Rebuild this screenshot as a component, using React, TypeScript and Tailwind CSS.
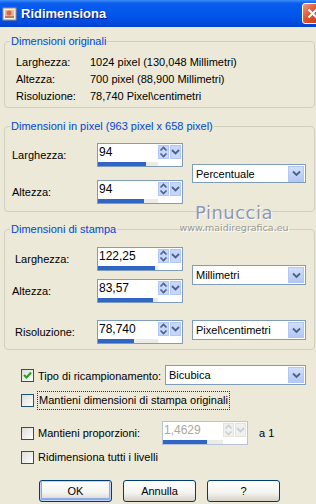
import React from "react";

const font = "font-['Liberation_Sans',Arial,sans-serif]";

function SpinArrows({ disabled }: { disabled?: boolean }) {
  const c = disabled ? "#C8CDD8" : "#4D6185";
  const bg = disabled ? "bg-[#F1F1EC] border-[#E3E3DC]" : "bg-[#C6D6FC] border-[#B3C7F4]";
  return (
    <div className="flex gap-[1px] mt-[1px] mr-[1px]">
      <div className={`w-[11px] h-[14px] border ${bg} flex items-center justify-center`}>
        <svg width="9" height="12" viewBox="0 0 9 12">
          <path d="M1.5 4.5 L4.5 1.5 L7.5 4.5" stroke={c} strokeWidth="1.6" fill="none" />
          <path d="M1.5 7.5 L4.5 10.5 L7.5 7.5" stroke={c} strokeWidth="1.6" fill="none" />
        </svg>
      </div>
      <div className={`w-[11px] h-[14px] border ${bg} flex items-center justify-center`}>
        <svg width="9" height="8" viewBox="0 0 9 8">
          <path d="M1 2 L4.5 5.5 L8 2" stroke={c} strokeWidth="1.8" fill="none" />
        </svg>
      </div>
    </div>
  );
}

function Spinner({ value, fill, disabled }: { value: string; fill: number; disabled?: boolean }) {
  return (
    <div
      className={`w-[86px] h-[24px] border ${
        disabled ? "border-[#B5C3D6]" : "border-[#7F9DB9]"
      } bg-white flex flex-col shrink-0`}
    >
      <div className="flex h-[17px]">
        <span
          className={`flex-1 pl-[1px] text-[12px] leading-[16px] ${
            disabled ? "text-[#ACA899]" : "text-black"
          }`}
        >
          {value}
        </span>
        <SpinArrows disabled={disabled} />
      </div>
      <div className="h-[4px] w-[60px] bg-[#ECEBE6] mt-[1px]">
        <div className="h-full bg-[#2F65C5]" style={{ width: fill }} />
      </div>
    </div>
  );
}

function Select({ label, width, height = 20 }: { label: string; width: number; height?: number }) {
  return (
    <div
      className="border border-[#7F9DB9] bg-white flex items-center shrink-0"
      style={{ width, height }}
    >
      <span className="flex-1 pl-[3px] text-[11px] leading-[14px]">{label}</span>
      <div className="w-[16px] h-[16px] mr-[1px] border border-[#B3C7F4] bg-[linear-gradient(to_bottom,#D2DEFC,#B3C8F5)] flex items-center justify-center">
        <svg width="9" height="7" viewBox="0 0 9 7">
          <path d="M1 1.5 L4.5 5 L8 1.5" stroke="#4D6185" strokeWidth="1.8" fill="none" />
        </svg>
      </div>
    </div>
  );
}

function Checkbox({ checked }: { checked?: boolean }) {
  return (
    <div className="w-[13px] h-[13px] border border-[#1C5180] bg-[linear-gradient(135deg,#DCDCD7,#FFFFFF)] flex items-center justify-center shrink-0">
      {checked && (
        <svg width="9" height="9" viewBox="0 0 9 9">
          <path d="M1 4 L3.5 6.5 L8 1.5" stroke="#21A121" strokeWidth="2" fill="none" />
        </svg>
      )}
    </div>
  );
}

function Button({ label, def }: { label: string; def?: boolean }) {
  return (
    <div
      className={`w-[73px] h-[22px] rounded-[3px] border border-[#003C74] flex items-center justify-center text-[11px] bg-[linear-gradient(to_bottom,#FFFFFF,#F3F3EF_60%,#D6D0C5)] ${
        def ? "shadow-[inset_0_0_0_1px_#C1D3FB,inset_0_-1px_0_2px_#8BAAE8]" : ""
      }`}
    >
      {label}
    </div>
  );
}

function Group({ title, className, children }: { title: string; className: string; children: React.ReactNode }) {
  return (
    <fieldset
      className={`ml-[4px] mr-[1px] border border-[#D0D0BF] rounded-[4px] pl-[7px] ${className}`}
    >
      <legend className="ml-[-2px] px-[1px] text-[#0046D5] text-[11px] leading-[14px]">{title}</legend>
      {children}
    </fieldset>
  );
}

export default function App() {
  return (
    <div className={`w-[316px] h-[504px] bg-[#ECE9D8] overflow-hidden relative text-black text-[11px] ${font}`}>
      {/* title bar */}
      <div className="h-[27px] flex items-center bg-[linear-gradient(to_bottom,#3D8FF7,#0A5CEE_12%,#0055EA_60%,#0049D9_90%,#003FC8)]">
        <svg width="16" height="16" viewBox="0 0 16 16" className="ml-[2px] mr-[3px]">
          <rect x="1" y="2" width="13" height="12" fill="#F4EFE6" stroke="#A98F6A" />
          <rect x="3" y="4" width="9" height="8" fill="#E9B797" />
          <circle cx="7" cy="7" r="2.5" fill="#D9684B" />
          <rect x="3" y="10" width="9" height="2" fill="#C27B52" />
        </svg>
        <span className="text-white font-bold text-[13px] [text-shadow:1px_1px_#0A1883]">Ridimensiona</span>
        <div className="ml-auto mr-[-7px] w-[21px] h-[21px] rounded-[3px] border border-white bg-[linear-gradient(135deg,#F09A7F,#E1552B_45%,#C43A14)] flex items-center justify-center">
          <svg width="11" height="11" viewBox="0 0 11 11">
            <path d="M1.5 1.5 L9.5 9.5 M9.5 1.5 L1.5 9.5" stroke="white" strokeWidth="2" />
          </svg>
        </div>
      </div>

      <Group title="Dimensioni originali" className="mt-[7px] pb-[2px]">
        <div className="pt-[6px] pl-[4px] flex flex-col">
          {[
            ["Larghezza:", "1024 pixel (130,048 Millimetri)"],
            ["Altezza:", "700 pixel (88,900 Millimetri)"],
            ["Risoluzione:", "78,740 Pixel\\centimetri"],
          ].map(([l, v]) => (
            <div key={l} className="h-[17px] flex items-center">
              <span className="w-[74px]">{l}</span>
              <span>{v}</span>
            </div>
          ))}
        </div>
      </Group>

      <Group title="Dimensioni in pixel (963 pixel x 658 pixel)" className="mt-[11px] pb-[7px]">
        <div className="pt-[10px] flex items-center">
          <div className="flex flex-col gap-[13px]">
            <div className="flex items-center">
              <span className="w-[85px]">Larghezza:</span>
              <Spinner value="94" fill={48} />
            </div>
            <div className="flex items-center">
              <span className="w-[85px]">Altezza:</span>
              <Spinner value="94" fill={46} />
            </div>
          </div>
          <div className="ml-[9px]">
            <Select label="Percentuale" width={114} height={19} />
          </div>
        </div>
      </Group>

      <Group title="Dimensioni di stampa" className="mt-[10px] pb-[5px]">
        <div className="pt-[11px] flex items-center">
          <div className="flex flex-col gap-[8px]">
            <div className="flex items-center">
              <span className="w-[85px] pl-[3px]">Larghezza:</span>
              <Spinner value="122,25" fill={57} />
            </div>
            <div className="flex items-center">
              <span className="w-[85px]">Altezza:</span>
              <Spinner value="83,57" fill={55} />
            </div>
          </div>
          <div className="ml-[9px]">
            <Select label="Millimetri" width={114} />
          </div>
        </div>
        <div className="mt-[17px] flex items-center">
          <span className="w-[85px] pl-[3px]">Risoluzione:</span>
          <Spinner value="78,740" fill={36} />
          <div className="ml-[9px] mt-[-4px]">
            <Select label="Pixel\centimetri" width={114} />
          </div>
        </div>
      </Group>

      {/* options */}
      <div className="pl-[21px] flex flex-col">
        <div className="mt-[15px] h-[20px] flex items-center">
          <Checkbox checked />
          <span className="ml-[4px] w-[127px] mt-[2px] whitespace-nowrap">Tipo di ricampionamento:</span>
          <Select label="Bicubica" width={141} />
        </div>
        <div className="mt-[8px] h-[15px] flex items-center">
          <Checkbox />
          <span className="ml-[3px] px-[1px] border border-dotted border-[#333] whitespace-nowrap">
            Mantieni dimensioni di stampa originali
          </span>
        </div>
        <div className="mt-[13px] flex items-center">
          <Checkbox />
          <span className="ml-[4px] w-[124px] whitespace-nowrap">Mantieni proporzioni:</span>
          <Spinner value="1,4629" fill={44} disabled />
          <span className="ml-[11px]">a 1</span>
        </div>
        <div className="mt-[6px] h-[13px] flex items-center">
          <Checkbox />
          <span className="ml-[4px] whitespace-nowrap">Ridimensiona tutti i livelli</span>
        </div>
        <div className="mt-[16px] ml-[18px] flex gap-[11px]">
          <Button label="OK" def />
          <Button label="Annulla" />
          <Button label="?" />
        </div>
      </div>

      {/* watermark */}
      <div className="absolute left-[170px] top-[203px] w-[128px] flex flex-col items-center pointer-events-none">
        <span className="text-[18px] leading-[19px] text-[#8E97B5] tracking-[0.5px] font-['DejaVu_Sans',sans-serif] [text-shadow:1px_1px_#FFFFFF]">
          Pinuccia
        </span>
        <span className="text-[9.5px] leading-[11px] text-[#9A9A94] font-['DejaVu_Sans',sans-serif] [text-shadow:1px_1px_#FFFFFF]">
          www.maidiregrafica.eu
        </span>
      </div>
    </div>
  );
}
